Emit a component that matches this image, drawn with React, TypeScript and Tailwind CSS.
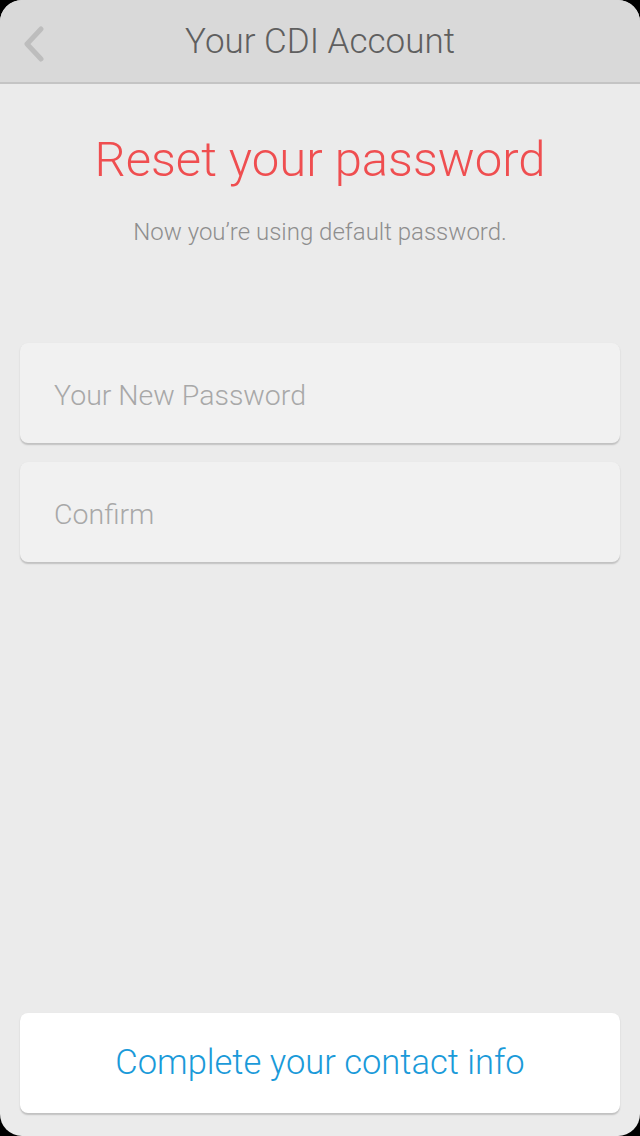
import React from "react";

export default function App() {
  return (
    <div className="h-[1136px] w-[640px] bg-black">
      <div
        className="flex h-full w-full flex-col overflow-hidden rounded-[22px] bg-[#ebebeb]"
        style={{ fontFamily: "Roboto, 'Liberation Sans', sans-serif" }}
      >
        <header className="relative flex h-[84px] shrink-0 items-center justify-center border-b-2 border-[#c4c4c4] bg-[#d9d9d9]">
          <button className="absolute left-[22px] top-[26px] h-[36px] w-[24px]" aria-label="Back">
            <svg viewBox="0 0 24 36" className="h-full w-full">
              <path
                d="M19 3 L5 18 L19 33"
                fill="none"
                stroke="#bdbdbd"
                strokeWidth="5"
                strokeLinecap="round"
                strokeLinejoin="round"
              />
            </svg>
          </button>
          <h1 className="text-[35px] font-light leading-none text-[#5f5f5f]">Your CDI Account</h1>
        </header>

        <main className="flex flex-1 flex-col px-5">
          <h2 className="mt-[51px] text-center text-[49px] font-light leading-none text-[#ef4e50]">
            Reset your password
          </h2>
          <p className="mt-[36px] text-center text-[24px] font-light leading-none text-[#8e8e8e]">
            Now you’re using default password.
          </p>

          <div className="mt-[99px] flex flex-col gap-[19px]">
            <input
              type="password"
              placeholder="Your New Password"
              className="h-[100px] w-full rounded-[8px] bg-[#f1f1f1] px-[34px] pt-[4px] text-[28.5px] font-light text-[#555] shadow-[0_1.5px_1.5px_rgba(0,0,0,0.18)] outline-none placeholder:text-[#a8a8a8]"
            />
            <input
              type="password"
              placeholder="Confirm"
              className="h-[100px] w-full rounded-[8px] bg-[#f1f1f1] px-[34px] pt-[4px] text-[28.5px] font-light text-[#555] shadow-[0_1.5px_1.5px_rgba(0,0,0,0.18)] outline-none placeholder:text-[#a8a8a8]"
            />
          </div>

          <button className="mb-[23px] mt-auto h-[100px] w-full rounded-[8px] bg-white text-[34.5px] font-light text-[#1a9ad9] shadow-[0_1.5px_1.5px_rgba(0,0,0,0.18)]">
            Complete your contact info
          </button>
        </main>
      </div>
    </div>
  );
}
